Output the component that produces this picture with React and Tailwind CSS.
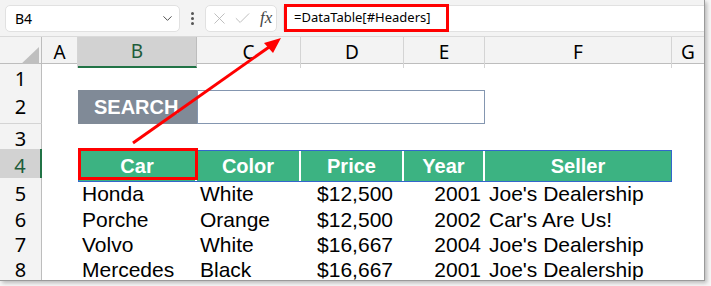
import { ChevronDown, X, Check } from "lucide-react"

const cols = "grid grid-cols-[42px_36px_119px_104px_103px_81px_187px_33px]"
const sheetFont = { fontFamily: '"Liberation Sans", Arial, sans-serif' }

const data = [
  ["5", "Honda", "White", "$12,500", "2001", "Joe's Dealership", "h-[26px]"],
  ["6", "Porche", "Orange", "$12,500", "2002", "Car's Are Us!", "h-[25px]"],
  ["7", "Volvo", "White", "$16,667", "2004", "Joe's Dealership", "h-[25px]"],
  ["8", "Mercedes", "Black", "$16,667", "2001", "Joe's Dealership", "h-[25px]"],
]

function RowHead({ n, selected }) {
  return (
    <div
      className={`flex items-center justify-center border-b border-r text-[20px] font-['Noto_Sans',sans-serif] ${
        selected
          ? "bg-[#d2d2d2] text-[#1e5c3a] border-b-[#bdbdbd] border-r-2 border-r-[#217346]"
          : "bg-[#f3f3f3] text-black border-b-[#d4d4d4] border-r-[#bdbdbd]"
      }`}
    >
      {n}
    </div>
  )
}

export default function App() {
  return (
    <div className="w-[711px] h-[286px] bg-[#f7f7f7] relative overflow-hidden">
      <div className="w-[705px] h-[281px] bg-white border-r border-b border-[#9a9a9a] shadow-[2px_2px_4px_rgba(0,0,0,0.25)] overflow-hidden relative">
        {/* Top Bar */}
        <div className="h-[37px] bg-[#f3f3f3] border-b border-[#dadada] flex items-center font-['Noto_Sans',sans-serif]">
          <div className="ml-[5px] w-[175px] h-[27px] bg-white border border-[#e1e1e1] rounded-[5px] flex items-center justify-between pl-[9px] pr-[4px]">
            <span className="text-[14px] text-black">B4</span>
            <ChevronDown size={15} strokeWidth={1.5} className="text-[#444]" />
          </div>
          <div className="w-[25px] flex flex-col items-center gap-[2px]">
            <span className="w-[3px] h-[3px] rounded-full bg-[#555]" />
            <span className="w-[3px] h-[3px] rounded-full bg-[#555]" />
            <span className="w-[3px] h-[3px] rounded-full bg-[#555]" />
          </div>
          <div className="w-[72px] h-[27px] bg-white border border-[#e1e1e1] rounded-[5px] flex items-center pl-[4px] gap-[4px]">
            <X size={19} strokeWidth={1.1} className="text-[#b5b5b5]" />
            <Check size={19} strokeWidth={1.1} className="text-[#b5b5b5]" />
            <span className="ml-[4px] text-[17px] italic text-[#444] font-['Liberation_Serif',serif]">fx</span>
          </div>
          <div className="ml-[6px] flex-1 h-[27px] bg-white border-y border-l border-[#e1e1e1] rounded-l-[3px] flex items-center">
            <div className="w-[165px] h-[28px] border-[3px] border-[#ff0000] flex items-center pl-[7px] text-[13px] text-black">
              =DataTable[#Headers]
            </div>
          </div>
        </div>

        <div style={sheetFont}>
          {/* Column headers */}
          <div className={`${cols} h-[27px] bg-[#f3f3f3] border-b border-[#bdbdbd] font-['Noto_Sans',sans-serif] text-[19px]`}>
            <div className="border-r border-[#bdbdbd] flex items-end justify-end pr-[2px] pb-[2px]">
              <svg width="20" height="19" viewBox="0 0 20 19">
                <polygon points="20,0 20,19 0,19" fill="#bfbfbf" />
              </svg>
            </div>
            {["A", "B", "C", "D", "E", "F", "G"].map((c) => (
              <div
                key={c}
                className={`flex items-center justify-center ${
                  c === "B"
                    ? "bg-[#d2d2d2] text-[#1e5c3a] border-b-2 border-[#217346] border-r border-r-[#bdbdbd]"
                    : "border-r border-[#d4d4d4] text-black"
                }`}
              >
                {c}
              </div>
            ))}
          </div>

          {/* Row 1 */}
          <div className={`${cols} h-[26px]`}>
            <RowHead n="1" />
          </div>

          {/* Row 2 */}
          <div className={`${cols} h-[34px]`}>
            <RowHead n="2" />
            <div />
            <div className="bg-[#808a97] text-white font-bold text-[20px] flex items-center pl-[16px]">SEARCH</div>
            <div className="col-span-3 border border-[#8496b0] bg-white" />
          </div>

          {/* Row 3 */}
          <div className={`${cols} h-[25px]`}>
            <RowHead n="3" />
          </div>

          {/* Row 4 */}
          <div className={`${cols} h-[29px]`}>
            <RowHead n="4" selected />
            <div />
            <div className="col-span-5 my-[1px] border border-[#3366cc] bg-[#3cb382] grid grid-cols-[118px_104px_103px_81px_186px] text-white font-bold text-[20px]">
              <div className="flex items-center justify-center border-r-2 border-white">Car</div>
              <div className="flex items-center justify-center border-r-2 border-white">Color</div>
              <div className="flex items-center justify-center border-r-2 border-white">Price</div>
              <div className="flex items-center justify-center border-r-2 border-white">Year</div>
              <div className="flex items-center justify-center">Seller</div>
            </div>
          </div>

          {/* Data rows */}
          {data.map(([n, car, color, price, year, seller, h]) => (
            <div key={n} className={`${cols} ${h} text-[21px] text-black`}>
              <RowHead n={n} />
              <div />
              <div className="flex items-center pl-[4px] pb-[1px]">{car}</div>
              <div className="flex items-center pl-[3px] pb-[1px]">{color}</div>
              <div className="flex items-center justify-end pr-[11px] pb-[1px]">{price}</div>
              <div className="flex items-center justify-end pr-[4px] pb-[1px]">{year}</div>
              <div className="flex items-center pl-[4px] pb-[1px] whitespace-nowrap">{seller}</div>
              <div />
            </div>
          ))}
        </div>

        {/* Red box around B4 */}
        <div className="absolute left-[78px] top-[148px] w-[120px] h-[32px] border-[3px] border-[#ff0000]" />

        {/* Arrow */}
        <svg className="absolute left-0 top-0" width="705" height="281">
          <line x1="133" y1="143" x2="272" y2="45" stroke="#ff0000" strokeWidth="3" />
          <polygon points="281,38 264,43 273,53" fill="#ff0000" />
        </svg>
      </div>
    </div>
  )
}
